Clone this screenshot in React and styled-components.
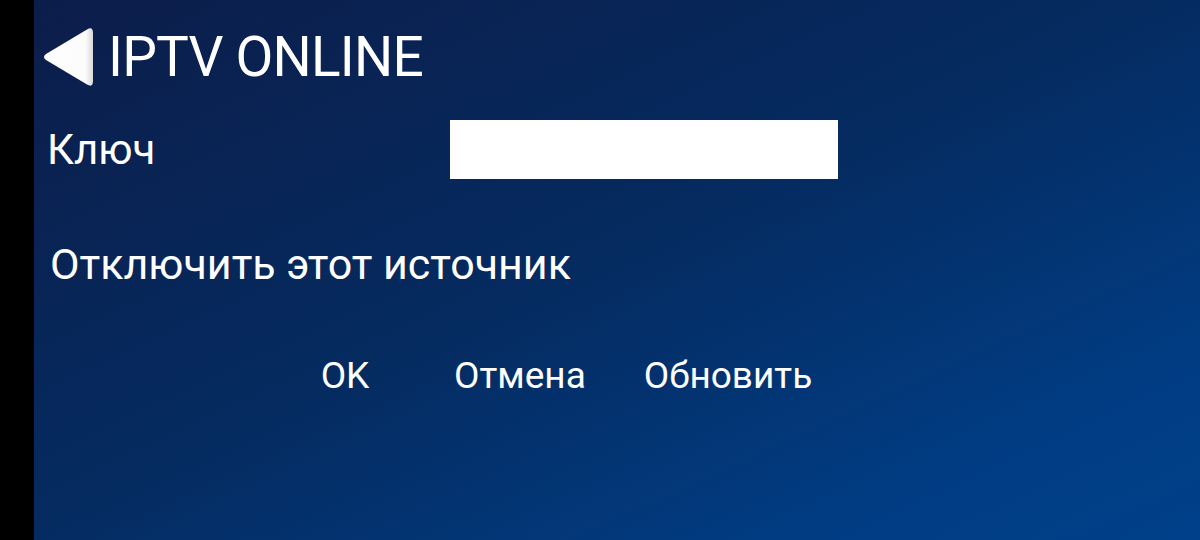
import React from 'react';
import styled, { createGlobalStyle } from 'styled-components';

const GlobalStyle = createGlobalStyle`
  html, body {
    margin: 0;
    padding: 0;
    background: #000;
  }
  body {
    font-family: Roboto, 'Noto Sans', 'DejaVu Sans', sans-serif;
  }
`;

const Screen = styled.div`
  width: 1200px;
  height: 540px;
  display: flex;
  overflow: hidden;
`;

const Bezel = styled.div`
  width: 34px;
  flex-shrink: 0;
  background: #000;
`;

const Main = styled.div`
  flex: 1;
  display: flex;
  flex-direction: column;
  padding: 24px 0 0 13px;
  background: linear-gradient(to bottom right, #0c1d4a 0%, #052b60 48%, #013c82 82%, #00408a 100%);
  color: #fff;
`;

const Header = styled.div`
  height: 66px;
  display: flex;
  align-items: center;
  margin-left: -5px;
`;

const BackButton = styled.button`
  width: 54px;
  height: 62px;
  padding: 0;
  border: none;
  background: transparent;
  display: flex;
  align-items: center;
  justify-content: center;
  margin-right: 12px;
  cursor: pointer;
`;

const Title = styled.h1`
  margin: 0;
  font-size: 55px;
  font-weight: 400;
  letter-spacing: -0.8px;
  line-height: 1;
`;

const KeyRow = styled.div`
  display: flex;
  align-items: center;
  margin-top: 30px;
  height: 59px;
`;

const Label = styled.span`
  font-size: ${(p) => p.size || 42}px;
  font-weight: 400;
  line-height: 1;
  white-space: nowrap;
`;

const KeyLabel = styled(Label)`
  width: 403px;
`;

const KeyInput = styled.input`
  width: 388px;
  height: 59px;
  box-sizing: border-box;
  border: none;
  outline: none;
  background: #fff;
  font-family: inherit;
  font-size: 28px;
  padding: 0 12px;
`;

const DisableRow = styled.div`
  margin-top: 60px;
  height: 50px;
  display: flex;
  align-items: center;
  padding-left: 3px;
`;

const Actions = styled.div`
  margin-top: 61px;
  height: 50px;
  display: flex;
  padding-left: 218px;
`;

const ActionButton = styled.button`
  min-width: 160px;
  padding: 0 29px;
  border: none;
  background: transparent;
  color: #fff;
  font-family: inherit;
  font-size: 37px;
  font-weight: 400;
  cursor: pointer;
`;

const BackArrow = () => (
  <svg width="52" height="60" viewBox="0 0 52 60">
    <defs>
      <linearGradient id="arrowShade" x1="0" y1="0" x2="1" y2="0">
        <stop offset="0" stopColor="#ffffff" />
        <stop offset="0.85" stopColor="#fbfbfb" />
        <stop offset="1" stopColor="#d8d8d8" />
      </linearGradient>
    </defs>
    <path
      d="M3 27 L44 2.5 Q50 -1 50 6 L50 54 Q50 61 44 57.5 L3 33 Q-1 30 3 27 Z"
      fill="url(#arrowShade)"
    />
  </svg>
);

export default function App() {
  return (
    <>
      <GlobalStyle />
      <Screen>
        <Bezel />
        <Main>
          <Header>
            <BackButton aria-label="Назад">
              <BackArrow />
            </BackButton>
            <Title>IPTV ONLINE</Title>
          </Header>
          <KeyRow>
            <KeyLabel size={42}>Ключ</KeyLabel>
            <KeyInput type="text" />
          </KeyRow>
          <DisableRow>
            <Label size={43}>Отключить этот источник</Label>
          </DisableRow>
          <Actions>
            <ActionButton>OK</ActionButton>
            <ActionButton>Отмена</ActionButton>
            <ActionButton>Обновить</ActionButton>
          </Actions>
        </Main>
      </Screen>
    </>
  );
}
